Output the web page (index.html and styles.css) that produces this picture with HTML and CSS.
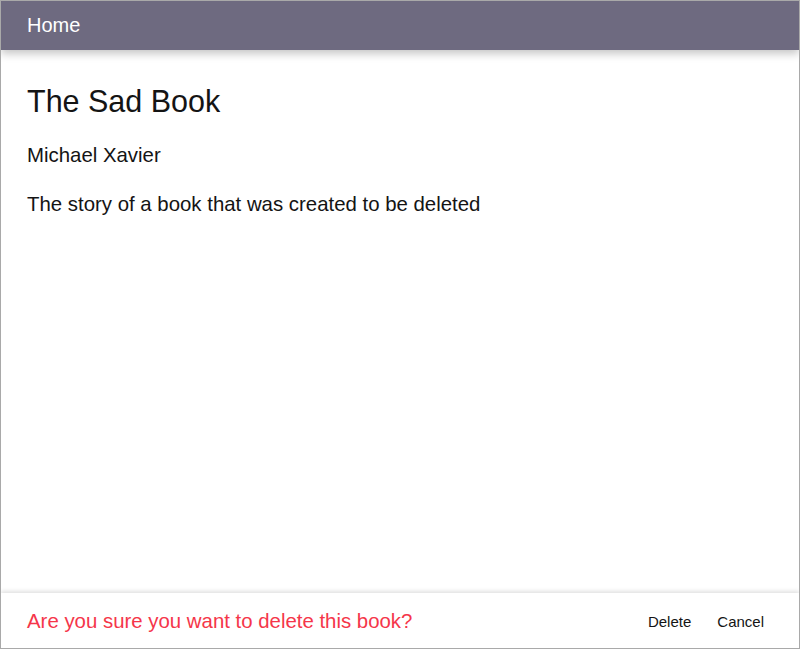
FILE: index.html
```html
<!DOCTYPE html>
<html>
<head>
<meta charset="utf-8">
<link rel="stylesheet" href="styles.css">
</head>
<body>
<div class="window">
  <header class="bar">
    <span class="bar-title">Home</span>
  </header>
  <main class="content">
    <h1 class="title">The Sad Book</h1>
    <p class="author">Michael Xavier</p>
    <p class="desc">The story of a book that was created to be deleted</p>
  </main>
  <footer class="confirm">
    <span class="confirm-text">Are you sure you want to delete this book?</span>
    <div class="actions">
      <button class="btn">Delete</button>
      <button class="btn">Cancel</button>
    </div>
  </footer>
</div>
</body>
</html>
```

FILE: styles.css
```css
html, body {
  margin: 0;
  padding: 0;
  background: #fff;
}
body {
  font-family: "Liberation Sans", Arial, sans-serif;
  color: #141414;
}
.window {
  box-sizing: border-box;
  width: 800px;
  height: 649px;
  border: 1px solid #a9a9a9;
  display: flex;
  flex-direction: column;
  overflow: hidden;
}
.bar {
  height: 49px;
  background: #6e6a80;
  display: flex;
  align-items: center;
  padding: 0 26px;
  box-shadow: 0 4px 8px rgba(0,0,0,0.22);
  position: relative;
  z-index: 1;
}
.bar-title {
  color: #fff;
  font-size: 20px;
}
.content {
  flex: 1;
  padding: 0 26px;
}
.title {
  font-size: 30.5px;
  font-weight: normal;
  margin: 34px 0 0;
  line-height: 34px;
}
.author {
  font-size: 20.4px;
  margin: 25px 0 0;
  line-height: 24px;
}
.desc {
  font-size: 20.4px;
  margin: 25px 0 0;
  line-height: 24px;
}
.confirm {
  height: 53px;
  display: flex;
  align-items: center;
  justify-content: space-between;
  padding: 2px 35px 0 26px;
  box-shadow: 0 -2px 4px rgba(0,0,0,0.12);
}
.confirm-text {
  color: #f5364a;
  font-size: 20.4px;
}
.actions {
  display: flex;
  gap: 26px;
}
.btn {
  background: none;
  border: none;
  padding: 0;
  font-family: "Liberation Sans", Arial, sans-serif;
  font-size: 15px;
  color: #141414;
  cursor: pointer;
}
```
